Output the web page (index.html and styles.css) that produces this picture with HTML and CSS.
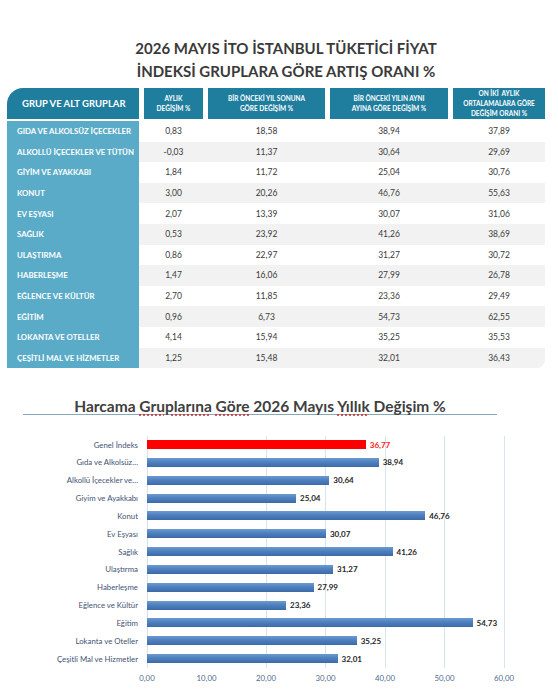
FILE: index.html
```html
<!DOCTYPE html>
<html lang="tr">
<head>
<meta charset="utf-8">
<title>İTO İstanbul TÜFE</title>
<link rel="stylesheet" href="styles.css">
</head>
<body>
<div class="page">
  <h1 class="title">2026 MAYIS İTO İSTANBUL TÜKETİCİ FİYAT<br>İNDEKSİ GRUPLARA GÖRE ARTIŞ ORANI %</h1>

  <div class="table">
    <div class="thead">
      <div class="th th-main">GRUP VE ALT GRUPLAR</div>
      <div class="th">AYLIK<br>DEĞİŞİM %</div>
      <div class="th">BİR ÖNCEKİ YIL SONUNA<br>GÖRE DEĞİŞİM %</div>
      <div class="th">BİR ÖNCEKİ YILIN AYNI<br>AYINA GÖRE DEĞİŞİM %</div>
      <div class="th">ON İKİ&nbsp; AYLIK<br>ORTALAMALARA GÖRE<br>DEĞİŞİM ORANI %</div>
    </div>
    <div class="tbody">
      <div class="tr"><div class="tn">GIDA VE ALKOLSÜZ İÇECEKLER</div><div class="td">0,83</div><div class="td">18,58</div><div class="td">38,94</div><div class="td">37,89</div></div>
      <div class="tr"><div class="tn">ALKOLLÜ İÇECEKLER VE TÜTÜN</div><div class="td">-0,03</div><div class="td">11,37</div><div class="td">30,64</div><div class="td">29,69</div></div>
      <div class="tr"><div class="tn">GİYİM VE AYAKKABI</div><div class="td">1,84</div><div class="td">11,72</div><div class="td">25,04</div><div class="td">30,76</div></div>
      <div class="tr"><div class="tn">KONUT</div><div class="td">3,00</div><div class="td">20,26</div><div class="td">46,76</div><div class="td">55,63</div></div>
      <div class="tr"><div class="tn">EV EŞYASI</div><div class="td">2,07</div><div class="td">13,39</div><div class="td">30,07</div><div class="td">31,06</div></div>
      <div class="tr"><div class="tn">SAĞLIK</div><div class="td">0,53</div><div class="td">23,92</div><div class="td">41,26</div><div class="td">38,69</div></div>
      <div class="tr"><div class="tn">ULAŞTIRMA</div><div class="td">0,86</div><div class="td">22,97</div><div class="td">31,27</div><div class="td">30,72</div></div>
      <div class="tr"><div class="tn">HABERLEŞME</div><div class="td">1,47</div><div class="td">16,06</div><div class="td">27,99</div><div class="td">26,78</div></div>
      <div class="tr"><div class="tn">EĞLENCE VE KÜLTÜR</div><div class="td">2,70</div><div class="td">11,85</div><div class="td">23,36</div><div class="td">29,49</div></div>
      <div class="tr"><div class="tn">EĞİTİM</div><div class="td">0,96</div><div class="td">6,73</div><div class="td">54,73</div><div class="td">62,55</div></div>
      <div class="tr"><div class="tn">LOKANTA VE OTELLER</div><div class="td">4,14</div><div class="td">15,94</div><div class="td">35,25</div><div class="td">35,53</div></div>
      <div class="tr"><div class="tn">ÇEŞİTLİ MAL VE HİZMETLER</div><div class="td">1,25</div><div class="td">15,48</div><div class="td">32,01</div><div class="td">36,43</div></div>
    </div>
  </div>

  <div class="chart">
    <div class="chart-title">Harcama <span class="sp">Gruplarına</span> <span class="sp">Göre</span> 2026 Mayıs <span class="sp">Yıllık</span> Değişim %</div>
    <div class="bars">
      <div class="row red"><span class="cat">Genel İndeks</span><div class="track"><div class="bar" style="width:218.8px"></div><span class="val">36,77</span></div></div>
      <div class="row"><span class="cat">Gıda ve Alkolsüz…</span><div class="track"><div class="bar" style="width:231.7px"></div><span class="val">38,94</span></div></div>
      <div class="row"><span class="cat">Alkollü İçecekler ve…</span><div class="track"><div class="bar" style="width:182.3px"></div><span class="val">30,64</span></div></div>
      <div class="row"><span class="cat">Giyim ve Ayakkabı</span><div class="track"><div class="bar" style="width:149px"></div><span class="val">25,04</span></div></div>
      <div class="row"><span class="cat">Konut</span><div class="track"><div class="bar" style="width:278.2px"></div><span class="val">46,76</span></div></div>
      <div class="row"><span class="cat">Ev Eşyası</span><div class="track"><div class="bar" style="width:178.9px"></div><span class="val">30,07</span></div></div>
      <div class="row"><span class="cat">Sağlık</span><div class="track"><div class="bar" style="width:245.5px"></div><span class="val">41,26</span></div></div>
      <div class="row"><span class="cat">Ulaştırma</span><div class="track"><div class="bar" style="width:186.1px"></div><span class="val">31,27</span></div></div>
      <div class="row"><span class="cat">Haberleşme</span><div class="track"><div class="bar" style="width:166.5px"></div><span class="val">27,99</span></div></div>
      <div class="row"><span class="cat">Eğlence ve Kültür</span><div class="track"><div class="bar" style="width:139px"></div><span class="val">23,36</span></div></div>
      <div class="row"><span class="cat">Eğitim</span><div class="track"><div class="bar" style="width:325.6px"></div><span class="val">54,73</span></div></div>
      <div class="row"><span class="cat">Lokanta ve Oteller</span><div class="track"><div class="bar" style="width:209.7px"></div><span class="val">35,25</span></div></div>
      <div class="row"><span class="cat">Çeşitli Mal ve Hizmetler</span><div class="track"><div class="bar" style="width:190.5px"></div><span class="val">32,01</span></div></div>
    </div>
    <div class="axis"><span>0,00</span><span>10,00</span><span>20,00</span><span>30,00</span><span>40,00</span><span>50,00</span><span>60,00</span></div>
  </div>
</div>
</body>
</html>
```

FILE: styles.css
```css
* { box-sizing: border-box; margin: 0; padding: 0; }

body {
  margin: 0;
  background: #ffffff;
  font-family: Lato, "Open Sans", "Liberation Sans", sans-serif;
  color: #333333;
}

.page { width: 558px; }

.title {
  margin: 37px 0 0 14px;
  font-size: 15px;
  line-height: 23px;
  font-weight: 700;
  text-align: center;
  color: #3a3a3a;
}

/* ---------- table ---------- */
.table {
  margin: 5px 0 0 7px;
  width: 538px;
}

.thead,
.tr {
  display: grid;
  grid-template-columns: 132px 59px 117px 118px 92px;
  column-gap: 5px;
}

.thead { height: 31px; margin-bottom: 2px; }

.th {
  background: #1f7d9e;
  color: #ffffff;
  font-weight: 700;
  font-size: 6.5px;
  line-height: 10px;
  display: flex;
  align-items: center;
  justify-content: center;
  text-align: center;
}

.th.th-main {
  border-top-left-radius: 16px;
  justify-content: flex-start;
  padding-left: 15px;
  font-size: 9.5px;
  text-align: left;
}

.tr {
  height: 20.6px;
  align-items: center;
}

.tbody .tr:nth-child(even) { background: #f2f2f2; }
.tbody .tr:last-child { border-bottom-right-radius: 8px; }

.tn {
  height: 100%;
  background: #5aabc7;
  color: #ffffff;
  font-weight: 700;
  font-size: 7.8px;
  display: flex;
  align-items: center;
  padding-left: 10px;
  white-space: nowrap;
  overflow: hidden;
}

.td {
  text-align: center;
  font-size: 8.5px;
  color: #3a3a3a;
}

/* ---------- chart ---------- */
.chart { margin-top: 30px; }

.chart-title {
  margin-left: 23px;
  width: 474px;
  text-align: center;
  font-size: 15.5px;
  line-height: 16px;
  font-weight: 700;
  color: #404040;
  border-bottom: 1.5px solid #86a8b8;
}

.sp {
  text-decoration: underline dotted #e02020;
  text-underline-offset: 3px;
}

.bars { margin-top: 20.5px; }

.row {
  display: flex;
  height: 17.85px;
  align-items: center;
}

.cat {
  width: 147px;
  flex: 0 0 147px;
  padding-right: 9px;
  text-align: right;
  font-size: 7.8px;
  color: #3f5275;
  white-space: nowrap;
}

.track {
  flex: 0 0 358px;
  height: 100%;
  display: flex;
  align-items: center;
  background: repeating-linear-gradient(90deg, #d8e3f0 0 1px, transparent 1px 59.5px);
}

.bar {
  height: 9px;
  background: linear-gradient(180deg, #6c9bd2 0%, #4f80be 45%, #3c6aa8 100%);
}

.val {
  margin-left: 4px;
  font-size: 8px;
  font-weight: 700;
  color: #262626;
}

.row.red .bar { background: #ff0000; }
.row.red .val { color: #ff1a1a; }

.axis {
  display: flex;
  margin: 5px 0 0 117.25px;
}

.axis span {
  width: 59.5px;
  flex: 0 0 59.5px;
  text-align: center;
  font-size: 7.8px;
  line-height: 10px;
  color: #4f6b8e;
}
```
